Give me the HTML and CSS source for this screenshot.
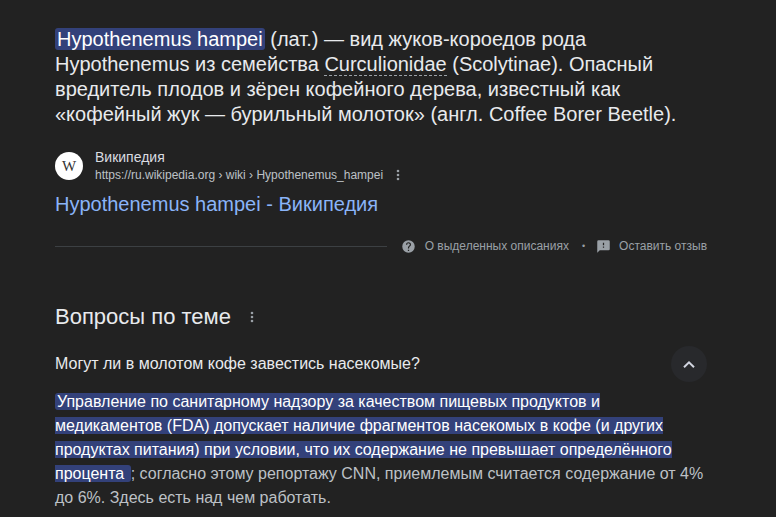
FILE: index.html
```html
<!DOCTYPE html>
<html lang="ru">
<head>
<meta charset="utf-8">
<title>Hypothenemus hampei</title>
<link rel="stylesheet" href="styles.css">
</head>
<body>
<main class="page">
  <p class="lead"><mark class="hl-round">Hypothenemus hampei</mark> (лат.) — вид жуков-короедов рода<br>Hypothenemus из семейства <span class="dashed">Curculionidae</span> (Scolytinae). Опасный<br>вредитель плодов и зёрен кофейного дерева, известный как<br>«кофейный жук — бурильный молоток» (англ. Coffee Borer Beetle).</p>

  <div class="source">
    <div class="favicon"><span class="w">W</span></div>
    <div class="source-text">
      <div class="site">Википедия</div>
      <div class="url-row">
        <span class="url">https://ru.wikipedia.org › wiki › Hypothenemus_hampei</span>
        <svg class="dots" width="4" height="12" viewBox="0 0 4 12"><circle cx="2" cy="2" r="1.3"/><circle cx="2" cy="6" r="1.3"/><circle cx="2" cy="10" r="1.3"/></svg>
      </div>
    </div>
  </div>
  <a class="title" href="#">Hypothenemus hampei - Википедия</a>

  <div class="feedback">
    <div class="rule"></div>
    <svg class="fb-icon" width="15" height="15" viewBox="0 0 24 24"><path d="M12 2a10 10 0 1 0 0 20 10 10 0 0 0 0-20zm1 17h-2v-2h2v2zm2.07-7.75-.9.92C13.45 12.9 13 13.5 13 15h-2v-.5c0-1.1.45-2.1 1.17-2.83l1.24-1.26A2 2 0 1 0 10 9H8a4 4 0 1 1 8 0c0 .88-.36 1.68-.93 2.25z"/></svg>
    <span class="fb-text">О выделенных описаниях</span>
    <span class="fb-dot">•</span>
    <svg class="fb-icon fb-icon-last" width="15" height="15" viewBox="0 0 24 24"><path d="M20 2H4a2 2 0 0 0-2 2v18l4-4h14a2 2 0 0 0 2-2V4a2 2 0 0 0-2-2zm-7 12h-2v-2h2v2zm0-4h-2V6h2v4z"/></svg>
    <span class="fb-text">Оставить отзыв</span>
  </div>

  <div class="paa-head">
    <h2 class="paa-title">Вопросы по теме</h2>
    <svg class="dots" width="4" height="12" viewBox="0 0 4 12"><circle cx="2" cy="2" r="1.3"/><circle cx="2" cy="6" r="1.3"/><circle cx="2" cy="10" r="1.3"/></svg>
  </div>

  <div class="question">
    <span class="q-text">Могут ли в молотом кофе завестись насекомые?</span>
    <span class="q-btn"><svg width="14" height="9" viewBox="0 0 14 9"><path d="M2 7.2 7 2.4l5 4.8" fill="none" stroke="#d2d5e0" stroke-width="2"/></svg></span>
  </div>

  <p class="answer"><mark class="hl-block">Управление по санитарному надзору за качеством пищевых продуктов и<br>медикаментов (FDA) допускает наличие фрагментов насекомых в кофе (и других<br>продуктах питания) при условии, что их содержание не превышает определённого<br>процента </mark> ; согласно этому репортажу CNN, приемлемым считается содержание от 4%<br>до 6%. Здесь есть над чем работать.</p>
</main>
</body>
</html>
```
FILE: styles.css
```css
* { box-sizing: border-box; }
html, body { margin: 0; height: 100%; overflow: hidden; }
body { background: #222222; color: #e8eaed; font-family: "Liberation Sans", Arial, sans-serif; }
.page { padding: 27px 69px 0 55px; }
.lead { margin: 0; font-size: 20px; line-height: 25px; white-space: nowrap; color: #e8eaed; }
.hl-round { background: #33417a; color: #fff; padding: 0 2px; border-radius: 3px; }
.dashed { border-bottom: 1px dashed #9aa0a6; }
.source { display: flex; align-items: center; gap: 12px; margin-top: 21px; }
.favicon { width: 28px; height: 28px; border-radius: 50%; background: #fff; display: flex; align-items: center; justify-content: center; }
.w { font-family: "Liberation Serif", serif; font-size: 15px; color: #333; }
.source-text { display: flex; flex-direction: column; }
.site { font-size: 14px; line-height: 18px; color: #dadce0; }
.url-row { display: flex; align-items: center; gap: 13px; }
.url { font-size: 12px; line-height: 18px; color: #bdc1c6; }
.dots { fill: #9aa0a6; flex: none; }
.title { display: block; margin-top: 7px; font-size: 20px; line-height: 26px; color: #8ab4f8; text-decoration: none; }
.feedback { display: flex; align-items: center; margin-top: 21px; height: 16px; }
.rule { flex: 1; height: 1px; background: #3c4043; margin-right: 14px; }
.fb-icon { fill: #9aa0a6; flex: none; margin-right: 9px; }
.fb-icon-last { margin-right: 8px; }
.fb-text { font-size: 12px; color: #9aa0a6; }
.fb-dot { font-size: 9px; color: #9aa0a6; margin: 0 11px 0 13px; }
.paa-head { display: flex; align-items: center; gap: 19px; margin-top: 49px; }
.paa-title { margin: 0; font-size: 22px; font-weight: 400; line-height: 28px; color: #e8eaed; }
.question { display: flex; align-items: center; justify-content: space-between; margin-top: 15px; height: 36px; }
.q-text { font-size: 16px; color: #e8eaed; }
.q-btn { width: 36px; height: 36px; border-radius: 50%; background: #28292c; display: flex; align-items: center; justify-content: center; }
.answer { margin: 8px 0 0; font-size: 16px; line-height: 24px; color: #bdc1c6; white-space: nowrap; }
.hl-block { background: #33417a; color: #fff; padding: 0 2px; border-radius: 3px; }
```
